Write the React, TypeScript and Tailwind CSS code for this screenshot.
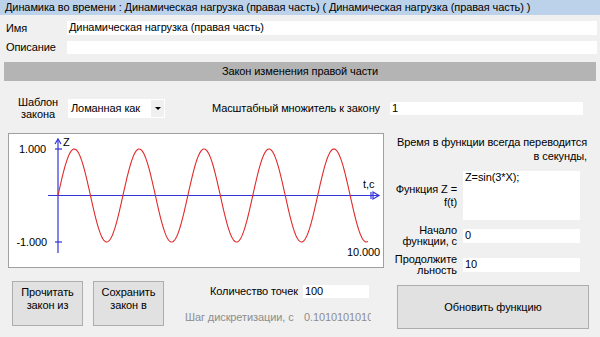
const FONT = "font-['Liberation_Sans',Arial,sans-serif]"

// sine curve, z = sin(3t), t in 0..10 s
const X0 = 49
const Y0 = 61.5
const PX_PER_SEC = 31
const AMP = 46.5
const sinePath = Array.from({ length: 401 }, (_, i) => {
  const t = (i / 400) * 10
  const x = X0 + t * PX_PER_SEC
  const y = Y0 - Math.sin(3 * t) * AMP
  return `${i === 0 ? 'M' : 'L'}${x.toFixed(2)} ${y.toFixed(2)}`
}).join(' ')

function Chart() {
  return (
    <div className="w-[376px] h-[135px] bg-white border border-[#a0a0a0]">
      <svg width="374" height="133" viewBox="0 0 374 133" className="block">
        <g stroke="#3333dd" strokeWidth="1.2" fill="none">
          <line x1={X0} y1="5" x2={X0} y2="119" />
          <line x1="39" y1={Y0} x2="370" y2={Y0} />
          <path d={`M${X0 - 3} 10 L${X0} 5 L${X0 + 3} 10`} />
          <path d="M364 58 L370 61.5 L364 65 Z" />
          <line x1="362" y1="58" x2="362" y2="65" />
          <line x1="46" y1="15" x2="53" y2="15" />
          <line x1="46" y1="108" x2="53" y2="108" />
        </g>
        <path d={sinePath} stroke="#e02a2a" strokeWidth="1.1" fill="none" />
        <g fontFamily="Liberation Sans, Arial, sans-serif" fontSize="11" fill="#000">
          <text x="37" y="19" textAnchor="end">1.000</text>
          <text x="38" y="112" textAnchor="end">-1.000</text>
          <text x="54" y="12">Z</text>
          <text x="354" y="54">t,c</text>
          <text x="371" y="122" textAnchor="end">10.000</text>
        </g>
      </svg>
    </div>
  )
}

function Field({ value, className }: { value?: string; className: string }) {
  return <div className={`bg-white pl-[2px] leading-[13px] ${className}`}>{value}</div>
}

function Button({ children, className }: { children: React.ReactNode; className: string }) {
  return (
    <div className={`bg-[#e1e1e1] border border-[#adadad] flex flex-col items-center ${className}`}>
      {children}
    </div>
  )
}

export default function App() {
  return (
    <div className={`w-[600px] h-[337px] bg-[#f0f0f0] overflow-hidden text-[11px] tracking-[-0.1px] text-black ${FONT} flex flex-col`}>
      <div className="h-[15px] bg-[#bcd1ea] pl-[5px] leading-[15px] whitespace-nowrap">
        Динамика во времени : Динамическая нагрузка (правая часть) ( Динамическая нагрузка (правая часть) )
      </div>

      <div className="flex items-center mt-[6px] h-[14px]">
        <div className="w-[67px] pl-[6px]">Имя</div>
        <Field value="Динамическая нагрузка (правая часть)" className="w-[530px] h-[14px]" />
      </div>
      <div className="flex items-center mt-[5px] h-[14px]">
        <div className="w-[67px] pl-[6px]">Описание</div>
        <Field className="w-[530px] h-[13px]" />
      </div>

      <div className="mt-[8px] mx-[4px] h-[19px] bg-[#b4b4b4] flex items-center justify-center">
        Закон изменения правой части
      </div>

      <div className="flex items-center mt-[14px] h-[26px]">
        <div className="w-[64px] pl-[12px] text-center leading-[12px]">
          Шаблон
          <br />
          закона
        </div>
        <div className="ml-[4px] w-[97px] h-[19px] bg-white flex items-center">
          <span className="pl-[3px] flex-1 whitespace-nowrap overflow-hidden">Ломанная как</span>
          <span className="w-[15px] h-[19px] bg-[#f0f0f0] border border-white flex items-center justify-center">
            <span className="border-l-[3px] border-r-[3px] border-t-[3px] border-l-transparent border-r-transparent border-t-black" />
          </span>
        </div>
        <div className="ml-[47px] w-[178px] whitespace-nowrap">Масштабный множитель к закону</div>
        <Field value="1" className="w-[193px] h-[13px]" />
      </div>

      <div className="flex mt-[12px]">
        <div className="w-[388px] pl-[8px] flex flex-col">
          <Chart />
          <div className="flex mt-[13px]">
            <Button className="ml-[4px] w-[71px] h-[45px] pt-[4px] leading-[13px]">
              <span>Прочитать</span>
              <span>закон из</span>
            </Button>
            <Button className="ml-[10px] w-[71px] h-[45px] pt-[4px] leading-[13px]">
              <span>Сохранить</span>
              <span>закон в</span>
            </Button>
            <div className="ml-[21px] flex flex-col">
              <div className="flex items-center mt-[4px] h-[13px]">
                <div className="w-[118px] pl-[25px] whitespace-nowrap">Количество точек</div>
                <Field value="100" className="w-[66px] h-[13px]" />
              </div>
              <div className="flex items-center mt-[13px] h-[13px] text-[#8d8d8d]">
                <div className="w-[118px] whitespace-nowrap">Шаг дискретизации, с</div>
                <div className="w-[68px] pl-[1px] whitespace-nowrap overflow-hidden">0.10101010101</div>
              </div>
            </div>
          </div>
        </div>

        <div className="w-[212px] flex flex-col">
          <div className="mt-[2px] pr-[13px] text-right leading-[14px]">
            Время в функции всегда переводится
            <br />
            в секунды,
          </div>
          <div className="flex items-center mt-[8px]">
            <div className="w-[75px] pr-[6px] text-right leading-[13px]">
              Функция Z =
              <br />
              f(t)
            </div>
            <Field value="Z=sin(3*X);" className="w-[117px] h-[49px]" />
          </div>
          <div className="flex items-center mt-[5px]">
            <div className="w-[75px] pr-[6px] text-right leading-[11px]">
              Начало
              <br />
              <span className="whitespace-nowrap">функции, с</span>
            </div>
            <Field value="0" className="w-[117px] h-[14px]" />
          </div>
          <div className="flex items-center mt-[7px]">
            <div className="w-[75px] pr-[6px] text-right leading-[11px]">
              Продолжите
              <br />
              льность
            </div>
            <Field value="10" className="w-[117px] h-[14px]" />
          </div>
          <Button className="mt-[9px] ml-[9px] w-[192px] h-[44px] justify-center">
            <span>Обновить функцию</span>
          </Button>
        </div>
      </div>
    </div>
  )
}
